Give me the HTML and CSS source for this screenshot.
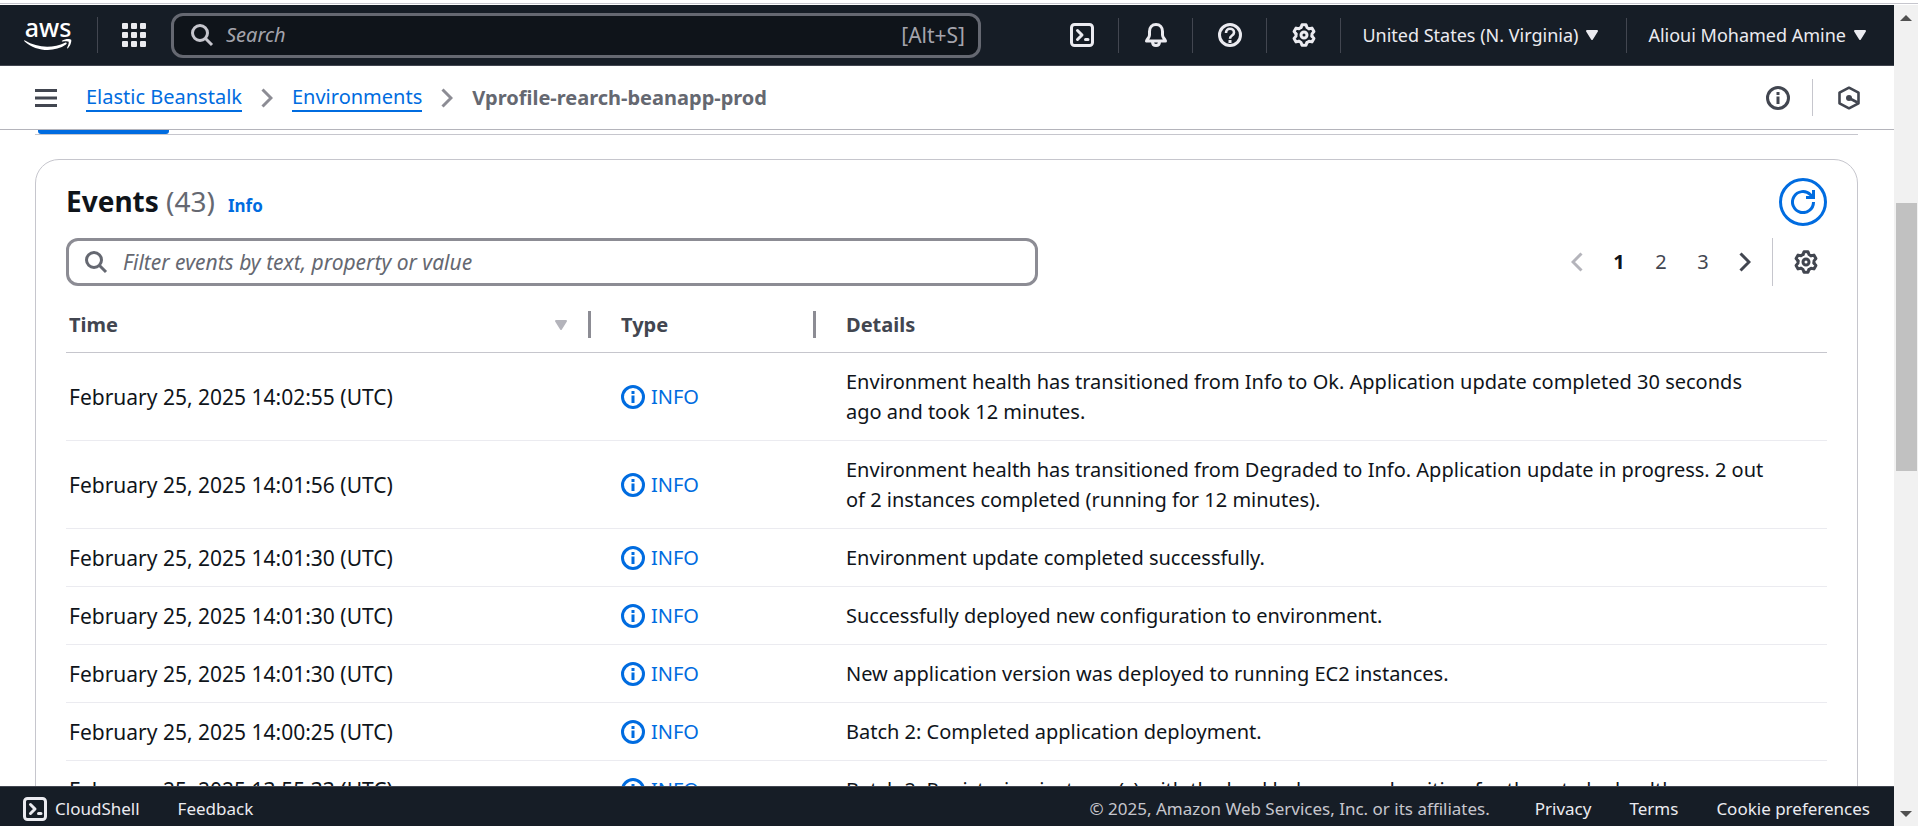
FILE: index.html
```html
<!DOCTYPE html>
<html lang="en">
<head>
<meta charset="utf-8">
<meta name="viewport" content="width=device-width, initial-scale=1">
<title>Elastic Beanstalk - Environment events</title>
<link rel="stylesheet" href="styles.css">
</head>
<body>
<svg class="sprite" aria-hidden="true">
  <symbol id="i-search" viewBox="0 0 24 24"><g fill="none" stroke="currentColor" stroke-width="3"><circle cx="10" cy="10" r="7.5"/><path d="M15.5 15.5 22 22"/></g></symbol>
  <symbol id="i-shell" viewBox="0 0 24 24"><g fill="none" stroke="currentColor" stroke-width="3" stroke-linejoin="round"><rect x="1.5" y="1.5" width="21" height="21" rx="3"/><path stroke-linecap="round" d="M7.5 7.5 12 12l-4.500 4.500M15.500 16.500H18"/></g></symbol>
  <symbol id="i-bell" viewBox="0 0 24 24"><g fill="none" stroke="currentColor" stroke-width="3" stroke-linejoin="round"><path d="M12 1.500C8 1.500 5.500 4.500 5.500 8.500V12c0 2.500-2 3.500-3 6h19c-1-2.500-3-3.500-3-6V8.500c0-4-2.500-7-6.500-7z"/><path d="M8.500 18.500c0 2.500 1.500 4 3.500 4s3.500-1.500 3.500-4"/></g></symbol>
  <symbol id="i-help" viewBox="0 0 24 24"><g fill="none" stroke="currentColor" stroke-width="3"><circle cx="12" cy="12" r="10.500"/><path stroke-width="2.600" d="M8 10c0-2.700 1.700-4.200 4-4.200s4 1.500 4 3.700c0 3.300-4 2.800-4 6.200"/><path d="M10.500 18.500h3"/></g></symbol>
  <symbol id="i-info" viewBox="0 0 24 24"><g fill="none" stroke="currentColor" stroke-width="3"><circle cx="12" cy="12" r="10.500"/><path d="M12 10.500V18M12 6v3"/></g></symbol>
  <symbol id="i-gear" viewBox="-12 -12 24 24"><g fill="none" stroke="currentColor" stroke-width="3" stroke-linejoin="round" stroke-linecap="round"><circle r="3"/>
    <path id="tooth" d="M-3-7.500-2-10.300H2L3-7.500 5-6.300"/><use href="#tooth" transform="rotate(60)"/><use href="#tooth" transform="rotate(120)"/><use href="#tooth" transform="rotate(180)"/><use href="#tooth" transform="rotate(240)"/><use href="#tooth" transform="rotate(300)"/></g></symbol>
  <symbol id="i-caret" viewBox="0 0 14 12"><path fill="currentColor" stroke="currentColor" stroke-width="2" stroke-linejoin="round" d="M2 2h10L7 10z"/></symbol>
  <symbol id="i-chevron" viewBox="0 0 12 20"><path fill="none" stroke="currentColor" stroke-width="3" d="M1.500 1.500 10 10l-8.500 8.500"/></symbol>
  <symbol id="i-refresh" viewBox="0 0 24 24"><g fill="none" stroke="currentColor" stroke-width="3"><path d="M22.500 12A10.500 10.500 0 1 1 19.500 4.700L22 7.500"/><path d="M15 7.500h7.500V0"/></g></symbol>
  <symbol id="i-hex" viewBox="0 0 24 24"><g fill="none" stroke="currentColor" stroke-width="2.600" stroke-linejoin="round"><path d="M12 1.700l9.500 5v10.600l-9.500 5-9.500-5V6.700z"/><path d="M12 12l8.500 4.500"/></g><circle cx="12" cy="12" r="3" fill="currentColor"/></symbol>
</svg>

<div class="window-edge"></div>
<div class="window">
  <div class="console">
    <header class="topnav">
      <a class="logo" href="#" aria-label="AWS home">
        <svg viewBox="0 0 48 40" width="48" height="40"><text class="logo-text" x="24" y="22" text-anchor="middle">aws</text><g fill="currentColor" transform="translate(0 5)"><path d="M1 20.500c12 7.500 28 8 40 2.200 1.500-.7 2.500.6 1 1.800C30 32.800 12 31.500.600 21.400c-.8-.7-.3-1.300.4-.9z"/><path d="M38 20.800c3-2.300 8-2.300 9-1.200 1 1.200-.4 6.200-3 8.600-.7.500-1.200.2-.8-.6.900-2 2-5 1.400-5.800-.7-.9-3.700-.6-5.800-.300-.9.100-1.300-.3-.8-.7z"/></g></svg>
      </a>
      <button class="apps" aria-label="Services">
        <svg viewBox="0 0 24 24" width="24" height="24" fill="currentColor"><rect width="6" height="6" rx="1"/><rect x="9" width="6" height="6" rx="1"/><rect x="18" width="6" height="6" rx="1"/><rect y="9" width="6" height="6" rx="1"/><rect x="9" y="9" width="6" height="6" rx="1"/><rect x="18" y="9" width="6" height="6" rx="1"/><rect y="18" width="6" height="6" rx="1"/><rect x="9" y="18" width="6" height="6" rx="1"/><rect x="18" y="18" width="6" height="6" rx="1"/></svg>
      </button>
      <label class="search">
        <svg class="icon"><use href="#i-search"/></svg>
        <input type="search" placeholder="Search" aria-label="Search">
        <span class="shortcut">[Alt+S]</span>
      </label>
      <nav class="utilities" aria-label="Utilities">
        <button class="util" aria-label="CloudShell"><svg class="icon"><use href="#i-shell"/></svg></button>
        <button class="util" aria-label="Notifications"><svg class="icon"><use href="#i-bell"/></svg></button>
        <button class="util" aria-label="Help"><svg class="icon"><use href="#i-help"/></svg></button>
        <button class="util" aria-label="Settings"><svg class="icon"><use href="#i-gear"/></svg></button>
        <button class="util menu">United States (N. Virginia)<svg class="caret"><use href="#i-caret"/></svg></button>
        <button class="util menu">Alioui Mohamed Amine<svg class="caret"><use href="#i-caret"/></svg></button>
      </nav>
    </header>

    <div class="crumbbar">
      <button class="hamburger" aria-label="Open navigation"><svg viewBox="0 0 22 18" width="22" height="18" stroke="currentColor" stroke-width="3"><path d="M0 1.500h22M0 9h22M0 16.500h22"/></svg></button>
      <nav class="crumbs" aria-label="Breadcrumbs">
        <a href="#">Elastic Beanstalk</a>
        <svg class="chevron"><use href="#i-chevron"/></svg>
        <a href="#">Environments</a>
        <svg class="chevron"><use href="#i-chevron"/></svg>
        <span class="current">Vprofile-rearch-beanapp-prod</span>
      </nav>
      <button class="panel" aria-label="Info panel"><svg class="icon"><use href="#i-info"/></svg></button>
      <button class="panel" aria-label="Tools"><svg class="icon"><use href="#i-hex"/></svg></button>
    </div>

    <main class="content">
      <div class="tabs"><div class="tab-active"></div></div>
      <section class="card">
        <div class="card-head">
          <h2>Events <span class="count">(43)</span></h2>
          <a class="info-link" href="#">Info</a>
          <button class="refresh" aria-label="Refresh"><svg class="icon"><use href="#i-refresh"/></svg></button>
        </div>
        <div class="tools">
          <label class="filter">
            <svg class="icon"><use href="#i-search"/></svg>
            <input type="text" placeholder="Filter events by text, property or value" aria-label="Filter events">
          </label>
          <nav class="pager" aria-label="Pagination">
            <button disabled aria-label="Previous page"><svg class="chevron back"><use href="#i-chevron"/></svg></button>
            <button class="page-current" aria-current="page">1</button>
            <button>2</button>
            <button>3</button>
            <button aria-label="Next page"><svg class="chevron"><use href="#i-chevron"/></svg></button>
          </nav>
          <button class="prefs" aria-label="Preferences"><svg class="icon"><use href="#i-gear"/></svg></button>
        </div>
        <table class="events">
          <colgroup><col class="c-time"><col class="c-type"><col></colgroup>
          <thead>
            <tr>
              <th scope="col"><div class="head-cell sep">Time<svg class="caret"><use href="#i-caret"/></svg></div></th>
              <th scope="col"><div class="head-cell sep">Type</div></th>
              <th scope="col"><div class="head-cell">Details</div></th>
            </tr>
          </thead>
          <tbody>
            <tr><td>February 25, 2025 14:02:55 (UTC)</td><td><span class="status"><svg class="icon"><use href="#i-info"/></svg>INFO</span></td><td>Environment health has transitioned from Info to Ok. Application update completed 30 seconds ago and took 12 minutes.</td></tr>
            <tr><td>February 25, 2025 14:01:56 (UTC)</td><td><span class="status"><svg class="icon"><use href="#i-info"/></svg>INFO</span></td><td>Environment health has transitioned from Degraded to Info. Application update in progress. 2 out of 2 instances completed (running for 12 minutes).</td></tr>
            <tr><td>February 25, 2025 14:01:30 (UTC)</td><td><span class="status"><svg class="icon"><use href="#i-info"/></svg>INFO</span></td><td>Environment update completed successfully.</td></tr>
            <tr><td>February 25, 2025 14:01:30 (UTC)</td><td><span class="status"><svg class="icon"><use href="#i-info"/></svg>INFO</span></td><td>Successfully deployed new configuration to environment.</td></tr>
            <tr><td>February 25, 2025 14:01:30 (UTC)</td><td><span class="status"><svg class="icon"><use href="#i-info"/></svg>INFO</span></td><td>New application version was deployed to running EC2 instances.</td></tr>
            <tr><td>February 25, 2025 14:00:25 (UTC)</td><td><span class="status"><svg class="icon"><use href="#i-info"/></svg>INFO</span></td><td>Batch 2: Completed application deployment.</td></tr>
            <tr><td>February 25, 2025 13:55:33 (UTC)</td><td><span class="status"><svg class="icon"><use href="#i-info"/></svg>INFO</span></td><td>Batch 2: Registering instance(s) with the load balancer and waiting for them to be healthy.</td></tr>
          </tbody>
        </table>
      </section>
    </main>

    <footer class="footer">
      <button class="shell"><svg class="icon"><use href="#i-shell"/></svg>CloudShell</button>
      <a href="#">Feedback</a>
      <span class="legal">© 2025, Amazon Web Services, Inc. or its affiliates.</span>
      <a href="#">Privacy</a>
      <a href="#">Terms</a>
      <a href="#">Cookie preferences</a>
    </footer>
  </div>
  <div class="scrollbar" aria-hidden="true">
    <svg class="arrow" viewBox="0 0 12 6"><path d="M0 6 6 0l6 6z"/></svg>
    <div class="track"><div class="thumb"></div></div>
    <svg class="arrow" viewBox="0 0 12 6"><path d="M0 0h12L6 6z"/></svg>
  </div>
</div>
</body>
</html>
```

FILE: styles.css
```css
* { box-sizing: border-box; }

body {
  margin: 0;
  height: 100vh;
  display: flex;
  flex-direction: column;
  background: #fff;
  color: #0f141a;
  font-family: "Noto Sans", "Open Sans", sans-serif;
  font-size: 20px;
  line-height: 30px;
}

button, input { font: inherit; color: inherit; background: none; border: 0; padding: 0; margin: 0; }
button { display: flex; align-items: center; justify-content: center; cursor: pointer; }
input { outline: 0; min-width: 0; }
svg { display: block; flex: none; }

.sprite { position: absolute; width: 0; height: 0; }
.icon { width: 24px; height: 24px; }
.caret { width: 14px; height: 12px; }
.chevron { width: 12px; height: 20px; color: #8c8c94; }

.window-edge { flex: none; height: 5px; border-top: 3px solid #fff; background: linear-gradient(#c6c6cd 1px, #fff 1px); }
.window { flex: 1; min-height: 0; display: flex; }
.console { flex: 1; min-width: 0; display: flex; flex-direction: column; }

/* Global navigation */
.topnav {
  flex: none;
  height: 61px;
  display: flex;
  align-items: center;
  background: #161d26;
  border-bottom: 1px solid #424650;
  color: #ebebf0;
  font-size: 18px;
}
.logo { display: flex; align-items: center; height: 36px; padding: 0 25px 0 24px; border-right: 1px solid #424650; color: #fff; }
.logo-text { font-size: 25px; font-weight: 500; line-height: 1; fill: currentColor; }
.apps { padding: 0 25px 0 24px; }
.search {
  flex: 0 1 810px;
  height: 45px;
  display: flex;
  align-items: center;
  padding: 0 13px 0 16px;
  border: 3px solid #656871;
  border-radius: 12px;
  background: #0f141a;
}
.search .icon { color: #c6c6cd; margin-right: 12px; }
.search input { flex: 1; font-size: 20px; }
.search input::placeholder { color: #a4a4ad; font-style: italic; opacity: 1; }
.shortcut { color: #a4a4ad; font-size: 21px; }
.utilities { display: flex; margin-left: auto; }
.util { height: 35px; width: 74px; border-left: 1px solid #424650; white-space: nowrap; }
.util:first-child { border-left-color: transparent; }
.util.menu { width: auto; gap: 7px; padding: 0 27px 0 21px; }

/* Breadcrumbs */
.crumbbar { flex: none; height: 64px; display: flex; align-items: center; padding: 0 10px 0 35px; border-bottom: 1px solid #b4b4bb; color: #424650; }
.hamburger { margin-right: 29px; }
.crumbs { flex: 1; display: flex; align-items: center; gap: 19px; }
.crumbs a { color: #006ce0; line-height: 27px; text-decoration: none; border-bottom: 2px solid #006ce0; }
.current { color: #656871; font-weight: 700; }
.panel { width: 69px; height: 37px; }
.panel + .panel { border-left: 1px solid #c6c6cd; width: 72px; }

/* Page body */
.content { flex: 1; min-height: 0; overflow: hidden; padding: 0 36px 0 35px; }
.tabs { height: 5px; padding-left: 3px; border-bottom: 1px solid #c6c6cd; margin-bottom: 24px; }
.tab-active { width: 131px; height: 4px; background: #006ce0; border-radius: 0 0 3px 3px; }
.card { border: 1px solid #c6c6cd; border-radius: 24px; padding: 18px 30px; }
.card-head { display: flex; align-items: center; margin-bottom: 12px; }
h2 { margin: 0; font-size: 28px; line-height: 36px; padding-bottom: 2px; font-weight: 700; }
.count { color: #656871; font-weight: 400; }
.info-link { color: #006ce0; font-size: 17px; font-weight: 700; text-decoration: none; margin: 7px 0 0 13px; }
.refresh { width: 48px; height: 48px; margin-left: auto; border: 3px solid #006ce0; border-radius: 50%; color: #006ce0; }

.tools { display: flex; align-items: center; color: #424650; }
.filter { flex: 0 1 972px; height: 48px; display: flex; align-items: center; gap: 15px; padding: 0 15px; border: 3px solid #8c8c94; border-radius: 12px; color: #656871; }
.filter input { flex: 1; font-size: 21px; }
.filter input::placeholder { color: #656871; font-style: italic; opacity: 1; }
.pager { display: flex; margin-left: auto; padding-right: 6px; }
.pager button { width: 42px; height: 30px; }
.pager .chevron { color: #424650; }
.pager .back { color: #b4b4bb; transform: scaleX(-1); }
.page-current { color: #0f141a; font-weight: 700; }
.prefs { width: 55px; height: 48px; padding-left: 12px; border-left: 1px solid #c6c6cd; }

/* Events table */
.events { width: 100%; table-layout: fixed; border-collapse: separate; border-spacing: 0; }
.c-time { width: 525px; }
.c-type { width: 225px; }
th { padding: 25px 0 14px 30px; text-align: left; color: #424650; border-bottom: 1px solid #c6c6cd; }
.head-cell { display: flex; align-items: center; justify-content: space-between; height: 27px; line-height: 27px; padding-right: 20px; }
.sep { border-right: 3px solid #8c8c94; }
.head-cell .caret { color: #b4b4bb; }
td { padding: 14px 30px 13px; border-bottom: 1px solid #ebebf0; vertical-align: middle; }
th:first-child, td:first-child { padding-left: 3px; }
td:first-child { font-size: 21px; }
td:last-child { padding-right: 50px; }
.status { display: flex; align-items: center; gap: 6px; color: #006ce0; }

/* Footer */
.footer { flex: none; height: 40px; display: flex; align-items: center; gap: 38px; padding: 4px 24px 0 23px; background: #161d26; border-top: 1px solid #424650; color: #ebebf0; font-size: 17px; }
.footer a { color: inherit; text-decoration: none; }
.shell { gap: 8px; }
.legal { margin-left: auto; margin-right: 7px; color: #c6c6cd; }

/* Scrollbar */
.scrollbar { flex: none; width: 24px; display: flex; flex-direction: column; align-items: center; padding: 10px 0 9px; background: #f1f1f1; }
.arrow { width: 12px; height: 6px; fill: #505050; }
.track { flex: 1; width: 21px; display: flex; flex-direction: column; }
.track::before { content: ""; flex: 0 0 23%; }
.thumb { flex: 0 0 34%; background: #c1c1c1; }
```
